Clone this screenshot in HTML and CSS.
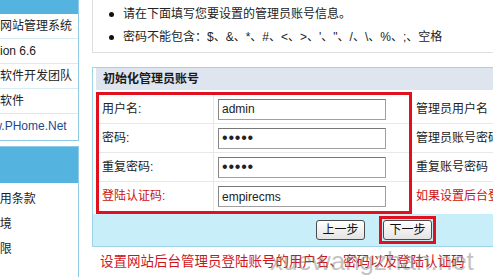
FILE: index.html
```html
<!DOCTYPE html>
<html lang="zh-CN">
<head>
<meta charset="utf-8">
<title>初始化管理员账号</title>
<link rel="stylesheet" href="styles.css">
</head>
<body>
<div class="page">
  <aside class="side">
    <div class="sbox sbox-info">
      <div class="shead"></div>
      <ul class="slist">
        <li>帝国网站管理系统</li>
        <li>Version 6.6</li>
        <li>帝国软件开发团队</li>
        <li>帝国软件</li>
        <li class="link">www.PHome.Net</li>
      </ul>
    </div>
    <div class="sbox sbox-steps">
      <div class="shead tall"></div>
      <ul class="slist">
        <li>1、阅读用户使用条款</li>
        <li>2、检测运行环境</li>
        <li>3、设置目录权限</li>
        <li>4、配置数据库</li>
      </ul>
    </div>
  </aside>
  <main class="main">
    <div class="notice">
      <ul>
        <li>请在下面填写您要设置的管理员账号信息。</li>
        <li>密码不能包含：$、&amp;、*、#、&lt;、&gt;、'、"、/、\、%、;、空格</li>
      </ul>
    </div>
    <div class="panel">
      <div class="ptitle">初始化管理员账号</div>
      <div class="form">
        <div class="redbox">
          <div class="frow"><span class="flabel">用户名:</span><span class="fcell"><input class="inp" type="text" value="admin"></span></div>
          <div class="frow"><span class="flabel">密码:</span><span class="fcell"><input class="inp pwd" type="password" value="admin"></span></div>
          <div class="frow"><span class="flabel">重复密码:</span><span class="fcell"><input class="inp pwd" type="password" value="admin"></span></div>
          <div class="frow"><span class="flabel red">登陆认证码:</span><span class="fcell"><input class="inp" type="text" value="empirecms"></span></div>
        </div>
        <div class="descs">
          <div class="drow">管理员用户名</div>
          <div class="drow">管理员账号密码</div>
          <div class="drow">重复账号密码</div>
          <div class="drow red">如果设置后台登陆认证码，则登陆后台时需要输入</div>
        </div>
      </div>
      <div class="btns">
        <button class="btn" type="button">上一步</button>
        <span class="hl"><button class="btn" type="button">下一步</button></span>
      </div>
    </div>
    <p class="tip">设置网站后台管理员登陆账号的用户名、密码以及登陆认证码</p>
  </main>
</div>
<span class="watermark">xuewangzhan.net</span>
</body>
</html>
```
FILE: styles.css
```css
html, body {
  margin: 0;
  padding: 0;
  background: #fff;
  overflow: hidden;
}
body {
  width: 493px;
  height: 277px;
  position: relative;
  font-family: "Liberation Sans", "Noto Sans CJK SC", sans-serif;
  font-size: 12px;
  color: #222;
}
.page {
  display: flex;
  align-items: flex-start;
}
.side {
  flex: none;
  width: 179px;
  margin-left: -100px;
}
.sbox {
  border: 1px solid #8fcbe4;
  border-left: 0;
  background: #fff;
}
.sbox-info {
  margin-top: -1px;
  padding-bottom: 2px;
}
.sbox-steps {
  margin-top: 5px;
  height: 200px;
}
.shead {
  height: 14px;
  background: #55b4df;
}
.shead.tall {
  height: 36px;
}
.slist {
  list-style: none;
  margin: 0;
  padding: 0;
}
.slist li {
  height: 24px;
  line-height: 24px;
  border-bottom: 1px solid #d7edf6;
  white-space: nowrap;
  padding-left: 76px;
}
.slist li:last-child {
  border-bottom: 0;
}
.sbox-steps .slist {
  padding-top: 4px;
}
.sbox-steps .slist li {
  padding-left: 21px;
  border-bottom: 0;
  height: 25px;
  line-height: 25px;
}
.slist li.link {
  color: #1c4a8f;
}
.main {
  flex: none;
  width: 460px;
  margin-left: 13px;
}
.notice {
  border: 1px solid #dedede;
  border-top: 0;
  padding: 3px 0;
}
.notice ul {
  list-style: none;
  margin: 0;
  padding: 0;
}
.notice li {
  position: relative;
  height: 23px;
  line-height: 23px;
  padding-left: 30px;
  white-space: nowrap;
}
.notice li::before {
  content: "";
  position: absolute;
  left: 16px;
  top: 9px;
  width: 5px;
  height: 5px;
  border-radius: 50%;
  background: #111;
}
.panel {
  margin-top: 14px;
  border: 1px solid #9fd3e8;
  background: #fff;
}
.ptitle {
  margin-left: 3px;
  height: 22px;
  line-height: 22px;
  padding-left: 7px;
  background: #dfe5ef;
  font-weight: bold;
  color: #1a1a1a;
}
.form {
  display: flex;
  margin-top: 2px;
  margin-left: 3px;
}
.redbox {
  flex: none;
  width: 316px;
  box-sizing: border-box;
  border: 3px solid #e0101e;
}
.frow {
  display: flex;
  height: 29px;
  border-bottom: 1px solid #e8e8e8;
  box-sizing: border-box;
}
.frow:last-child {
  border-bottom: 0;
}
.flabel {
  width: 115px;
  box-sizing: border-box;
  padding-left: 3px;
  line-height: 28px;
  border-right: 1px solid #e8e8e8;
}
.red {
  color: #cc1010;
}
.fcell {
  display: flex;
  align-items: center;
  padding-left: 4px;
}
.inp {
  width: 168px;
  height: 21px;
  box-sizing: border-box;
  margin: 0;
  padding: 0 3px;
  border: 1px solid #a0a0a0;
  border-top-color: #777;
  border-left-color: #888;
  font-family: "Liberation Sans", sans-serif;
  font-size: 12px;
  color: #222;
  background: #fff;
  outline: none;
}
.inp.pwd {
  font-size: 16px;
  letter-spacing: 0.8px;
  padding-left: 3px;
}
.descs {
  flex: 1;
  padding-top: 3px;
}
.drow {
  height: 29px;
  box-sizing: border-box;
  line-height: 28px;
  padding-left: 4px;
  border-bottom: 1px solid #e8e8e8;
  white-space: nowrap;
  overflow: hidden;
}
.drow:last-child {
  border-bottom: 0;
}
.btns {
  display: flex;
  align-items: center;
  height: 32px;
  padding-left: 223px;
  background: #c8eef9;
}
.btn {
  width: 49px;
  height: 20px;
  margin: 0;
  padding: 0;
  border: 1px solid #4a4a4a;
  border-radius: 3px;
  background: linear-gradient(#ffffff, #e4e4e4);
  font-family: "Liberation Sans", "Noto Sans CJK SC", sans-serif;
  font-size: 12px;
  line-height: 18px;
  color: #111;
}
.hl {
  display: flex;
  margin-left: 14px;
  padding: 1px;
  border: 3px solid #e0101e;
}
.tip {
  margin: 5px 0 0 8px;
  line-height: 20px;
  font-size: 13.5px;
  color: #d0141c;
  white-space: nowrap;
}
.watermark {
  position: absolute;
  left: 270px;
  top: 246px;
  font-family: "Liberation Sans", sans-serif;
  font-size: 26px;
  color: rgba(120, 120, 120, 0.45);
  white-space: nowrap;
}
```
